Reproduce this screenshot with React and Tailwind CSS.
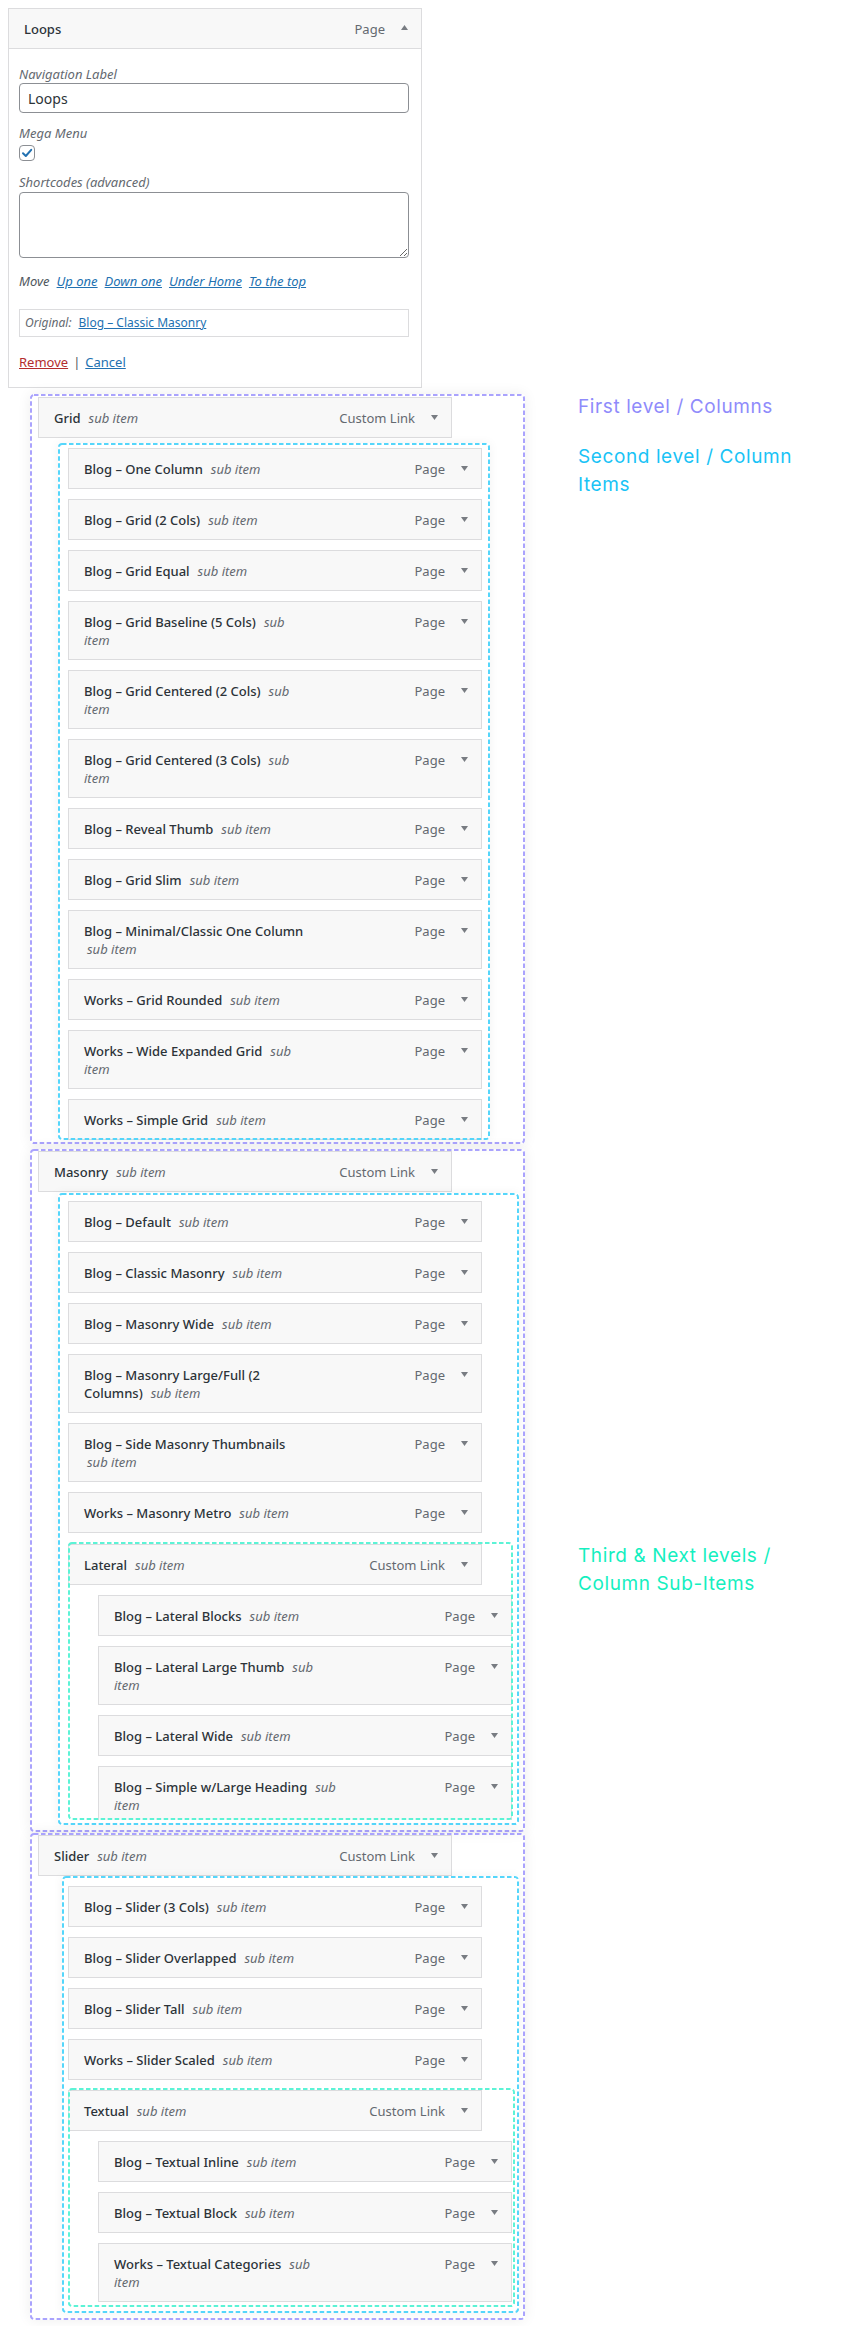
import React from "react";

// menu tree data: w = where "sub item" wraps ("sub" -> "sub / item", "all" -> whole tag on line 2)
const gridItems = [
  { t: "Blog – One Column" },
  { t: "Blog – Grid (2 Cols)" },
  { t: "Blog – Grid Equal" },
  { t: "Blog – Grid Baseline (5 Cols)", w: "sub" },
  { t: "Blog – Grid Centered (2 Cols)", w: "sub" },
  { t: "Blog – Grid Centered (3 Cols)", w: "sub" },
  { t: "Blog – Reveal Thumb" },
  { t: "Blog – Grid Slim" },
  { t: "Blog – Minimal/Classic One Column", w: "all" },
  { t: "Works – Grid Rounded" },
  { t: "Works – Wide Expanded Grid", w: "sub" },
  { t: "Works – Simple Grid" },
];

const masonryItems = [
  { t: "Blog – Default" },
  { t: "Blog – Classic Masonry" },
  { t: "Blog – Masonry Wide" },
  { t: "Blog – Masonry Large/Full (2\nColumns)" },
  { t: "Blog – Side Masonry Thumbnails", w: "all" },
  { t: "Works – Masonry Metro" },
];

const lateralItems = [
  { t: "Blog – Lateral Blocks" },
  { t: "Blog – Lateral Large Thumb", w: "sub" },
  { t: "Blog – Lateral Wide" },
  { t: "Blog – Simple w/Large Heading", w: "sub" },
];

const sliderItems = [
  { t: "Blog – Slider (3 Cols)" },
  { t: "Blog – Slider Overlapped" },
  { t: "Blog – Slider Tall" },
  { t: "Works – Slider Scaled" },
];

const textualItems = [
  { t: "Blog – Textual Inline" },
  { t: "Blog – Textual Block" },
  { t: "Works – Textual Categories", w: "sub" },
];

function Arrow({ up }) {
  return (
    <svg width="7" height="5" viewBox="0 0 7 5" className="shrink-0 mt-[6px]">
      <polygon points={up ? "0,5 7,5 3.5,0" : "0,0 7,0 3.5,5"} fill="#787c82" />
    </svg>
  );
}

// dashed annotation outline, laid over the box content
function Dashes({ color }) {
  return (
    <svg className="absolute inset-0 w-full h-full pointer-events-none overflow-visible">
      <rect
        x="1"
        y="1"
        rx="3"
        className="w-[calc(100%-2px)] h-[calc(100%-2px)]"
        fill="none"
        stroke={color}
        strokeWidth="2"
        strokeDasharray="4.5 2.5"
      />
    </svg>
  );
}

function Title({ t, w }) {
  const lines = t.split("\n");
  return (
    <div className="flex-1 min-w-0 whitespace-nowrap">
      <span className="font-medium text-[#2c3338]">
        {lines.map((l, i) => (
          <React.Fragment key={i}>
            {i > 0 && <br />}
            {l}
          </React.Fragment>
        ))}
      </span>
      {w === "sub" ? (
        <>
          <span className="italic text-[#646970] ml-[8px]">sub</span>
          <br />
          <span className="italic text-[#646970]">item</span>
        </>
      ) : w === "all" ? (
        <>
          <br />
          <span className="italic text-[#646970] ml-[3px]">sub item</span>
        </>
      ) : (
        <span className="italic text-[#646970] ml-[8px]">sub item</span>
      )}
    </div>
  );
}

function MenuItem({ t, w, type = "Page", className = "" }) {
  return (
    <div
      className={
        "flex items-start w-[414px] shrink-0 bg-[#f8f8f8] border border-[#dcdcde] pl-[15px] pr-[13px] pt-[11px] pb-[10px] leading-[18px] " +
        className
      }
    >
      <Title t={t} w={w} />
      <span className="text-[#646970] mr-[16px] pt-[1px] leading-[17px]">{type}</span>
      <Arrow />
    </div>
  );
}

function ItemList({ items, className = "" }) {
  return (
    <div className={"flex flex-col gap-[10px] " + className}>
      {items.map((it) => (
        <MenuItem key={it.t} t={it.t} w={it.w} />
      ))}
    </div>
  );
}

function EditPanel() {
  return (
    <div className="ml-[8px] w-[414px] border border-[#dcdcde] bg-white">
      <div className="h-[40px] flex items-center bg-[#f8f8f8] border-b border-[#dcdcde] pl-[15px] pr-[13px] leading-[18px]">
        <span className="flex-1 font-medium text-[#2c3338]">Loops</span>
        <span className="text-[#646970] mr-[16px]">Page</span>
        <svg width="7" height="5" viewBox="0 0 7 5" className="shrink-0 mb-[3px]">
          <polygon points="0,5 7,5 3.5,0" fill="#787c82" />
        </svg>
      </div>
      <div className="pl-[10px] pt-[16px] pb-[16px] leading-[18px]">
        <div className="italic text-[#646970]">Navigation Label</div>
        <input
          defaultValue="Loops"
          className="block w-[390px] h-[30px] border border-[#8c8f94] rounded-[4px] px-[8px] text-[14px] font-normal text-[#2c3338] outline-none"
        />
        <div className="italic text-[#646970] mt-[11px]">Mega Menu</div>
        <div className="mt-[3px] w-[16px] h-[16px] border border-[#8c8f94] rounded-[4px] flex items-center justify-center">
          <svg width="12" height="12" viewBox="0 0 12 12">
            <path d="M2 6.3 L4.8 9 L10.2 2.8" fill="none" stroke="#2271b1" strokeWidth="2" strokeLinecap="round" strokeLinejoin="round" />
          </svg>
        </div>
        <div className="italic text-[#646970] mt-[12px]">Shortcodes (advanced)</div>
        <textarea className="block mt-[1px] w-[390px] h-[66px] border border-[#8c8f94] rounded-[4px] outline-none" />
        <div className="mt-[14px] flex gap-[7px] italic">
          <span className="text-[#50575e]">Move</span>
          <span className="text-[#2271b1] underline">Up one</span>
          <span className="text-[#2271b1] underline">Down one</span>
          <span className="text-[#2271b1] underline">Under Home</span>
          <span className="text-[#2271b1] underline">To the top</span>
        </div>
        <div className="mt-[19px] w-[390px] h-[28px] border border-[#dcdcde] flex items-center pl-[5px] text-[12px]">
          <span className="italic text-[#646970]">Original:</span>
          <span className="ml-[7px] text-[#2271b1] underline">Blog – Classic Masonry</span>
        </div>
        <div className="mt-[16px]">
          <span className="text-[#b32d2e] underline">Remove</span>
          <span className="text-[#50575e] mx-[5px]">|</span>
          <span className="text-[#2271b1] underline">Cancel</span>
        </div>
      </div>
    </div>
  );
}

const purple = "#aaa3fd";
const cyan = "#55d6fb";
const teal = "#5cf3d6";

export default function App() {
  return (
    <div className="w-[868px] min-h-[2326px] bg-white pt-[8px] text-[13px] font-['Noto_Sans','Open_Sans',sans-serif]">
      <EditPanel />

      <div className="flex mt-[6px]">
        {/* menu tree */}
        <div className="pl-[30px] flex flex-col">
          {/* Grid column */}
          <div className="relative w-[495px] rounded-[3px] shadow-[0_0_14px_rgba(0,0,0,0.07)] pt-[3px] pl-[8px] pb-[8px]">
            <MenuItem t="Grid" type="Custom Link" />
            <div className="relative mt-[5px] ml-[20px] w-[432px] pt-[5px] pl-[10px] shadow-[0_0_10px_rgba(0,0,0,0.05)]">
              <ItemList items={gridItems} className="mb-[-4px]" />
              <Dashes color={cyan} />
            </div>
            <Dashes color={purple} />
          </div>

          {/* Masonry column */}
          <div className="relative w-[495px] rounded-[3px] shadow-[0_0_14px_rgba(0,0,0,0.07)] mt-[5px] pt-[2px] pl-[8px] pb-[7px]">
            <MenuItem t="Masonry" type="Custom Link" />
            <div className="relative mt-[1px] ml-[20px] w-[461px] pt-[8px] pl-[10px] pb-[5px] shadow-[0_0_10px_rgba(0,0,0,0.05)]">
              <ItemList items={masonryItems} />
              <div className="relative overflow-hidden mt-[9px] w-[445px] pt-[2px]">
                <MenuItem t="Lateral" type="Custom Link" />
                <ItemList items={lateralItems} className="mt-[10px] ml-[30px] mb-[-5px]" />
                <Dashes color={teal} />
              </div>
              <Dashes color={cyan} />
            </div>
            <Dashes color={purple} />
          </div>

          {/* Slider column */}
          <div className="relative w-[495px] rounded-[3px] shadow-[0_0_14px_rgba(0,0,0,0.07)] mt-[1px] pt-[2px] pl-[8px] pb-[7px]">
            <MenuItem t="Slider" type="Custom Link" />
            <div className="relative ml-[24px] w-[457px] pt-[10px] pl-[6px] pb-[6px] shadow-[0_0_10px_rgba(0,0,0,0.05)]">
              <ItemList items={sliderItems} />
              <div className="relative overflow-hidden mt-[8px] w-[447px] pt-[2px] pb-[5px]">
                <MenuItem t="Textual" type="Custom Link" />
                <ItemList items={textualItems} className="mt-[10px] ml-[30px]" />
                <Dashes color={teal} />
              </div>
              <Dashes color={cyan} />
            </div>
            <Dashes color={purple} />
          </div>
        </div>

        {/* level annotations */}
        <div className="ml-[53px] mt-[-1px] font-['Inter',sans-serif] text-[19px] tracking-[0.6px] leading-[28px]">
          <div className="text-[#8f8bfb]">First level / Columns</div>
          <div className="mt-[22px] text-[#19c3f6]">
            Second level / Column
            <br />
            Items
          </div>
          <div className="mt-[1043px] text-[#14efc0]">
            Third &amp; Next levels /
            <br />
            Column Sub-Items
          </div>
        </div>
      </div>
    </div>
  );
}
